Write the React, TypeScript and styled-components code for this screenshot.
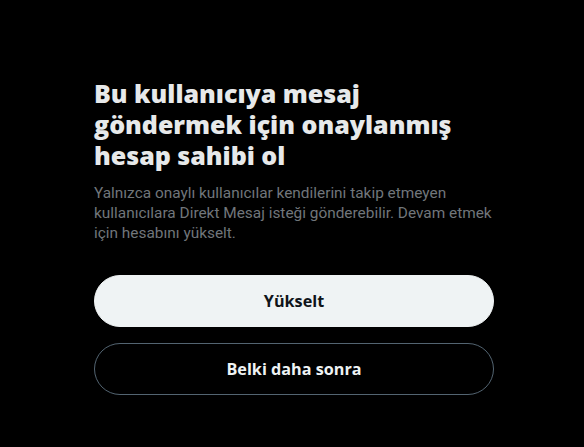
import React from "react";
import styled, { createGlobalStyle } from "styled-components";

const Global = createGlobalStyle`
  html, body { margin: 0; padding: 0; background: #000; }
  body { font-family: Roboto, "Noto Sans", sans-serif; -webkit-font-smoothing: antialiased; }
`;

const Page = styled.div`
  width: 584px;
  height: 447px;
  background: #000;
  display: flex;
  justify-content: center;
  align-items: flex-start;
  padding: 78px 0 0 4px;
  box-sizing: border-box;
`;

const Content = styled.div`
  width: 400px;
  display: flex;
  flex-direction: column;
`;

const Title = styled.h1`
  margin: 0;
  font-family: "Open Sans", "Noto Sans", sans-serif;
  font-size: 25px;
  line-height: 31px;
  font-weight: 800;
  color: #e7e9ea;
`;

const Body = styled.p`
  margin: 12px 0 0;
  font-family: Roboto, "Noto Sans", sans-serif;
  font-size: 15.4px;
  line-height: 20px;
  font-weight: 400;
  color: #71767b;
`;

const Actions = styled.div`
  display: flex;
  flex-direction: column;
  gap: 16px;
  margin-top: 32px;
`;

const Button = styled.button<{ $primary?: boolean }>`
  height: 52px;
  padding: 0 32px;
  border-radius: 9999px;
  font-family: "Open Sans", "Noto Sans", sans-serif;
  font-size: 16.2px;
  font-weight: 700;
  cursor: pointer;
  display: flex;
  align-items: center;
  justify-content: center;
  background: ${(p) => (p.$primary ? "#eff3f4" : "transparent")};
  color: ${(p) => (p.$primary ? "#0f1419" : "#eff3f4")};
  border: 1px solid ${(p) => (p.$primary ? "#eff3f4" : "#536471")};
`;

export default function App() {
  return (
    <>
      <Global />
      <Page>
        <Content>
          <Title>Bu kullanıcıya mesaj göndermek için onaylanmış hesap sahibi ol</Title>
          <Body>
            Yalnızca onaylı kullanıcılar kendilerini takip etmeyen kullanıcılara Direkt Mesaj isteği
            gönderebilir. Devam etmek için hesabını yükselt.
          </Body>
          <Actions>
            <Button $primary>Yükselt</Button>
            <Button>Belki daha sonra</Button>
          </Actions>
        </Content>
      </Page>
    </>
  );
}
